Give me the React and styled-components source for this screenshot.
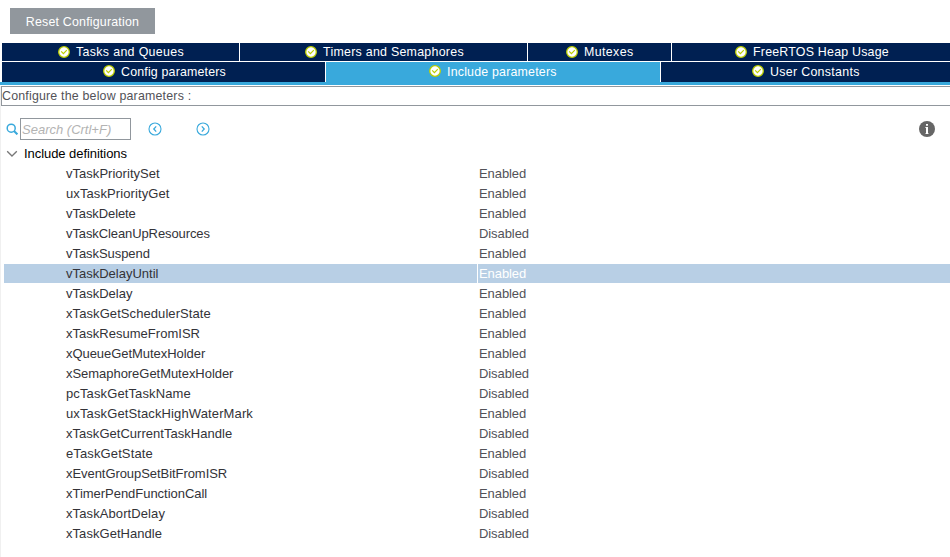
import React from "react";
import styled, { createGlobalStyle } from "styled-components";

const GlobalStyle = createGlobalStyle`
  * { box-sizing: border-box; }
  body {
    margin: 0;
    background: #fff;
    font: 13px/20px "Liberation Sans", Arial, sans-serif;
    overflow: hidden;
  }
`;

const Page = styled.main`
  display: flex;
  flex-direction: column;
  width: 950px;
  height: 557px;
  padding-top: 8px;
`;

const ResetButton = styled.button`
  width: 145px;
  height: 26px;
  margin: 0 0 9px 10px;
  padding: 1px 0 0;
  border: 0;
  background: #91979d;
  color: #fff;
  font: inherit;
  font-size: 12.4px;
  letter-spacing: 0.2px;
`;

const Tabs = styled.nav`
  display: flex;
  flex-direction: column;
  gap: 1px;
  border-bottom: 3px solid #39a9dc;
`;

const TabRow = styled.div`
  display: flex;
  gap: 1px;
  height: ${(p) => p.$height}px;
  padding-left: 2px;
`;

const Tab = styled.div`
  display: flex;
  align-items: center;
  gap: 6px;
  flex: 0 0 ${(p) => p.$width}px;
  padding-left: ${(p) => p.$inset}px;
  padding-bottom: ${(p) => p.$lift}px;
  background: ${(p) => (p.$active ? "#39a9dc" : "#002052")};
  color: #fff;
  font-size: 12.4px;
  line-height: 18px;
  letter-spacing: ${(p) => p.$tracking}px;
  white-space: nowrap;
`;

const TabLabel = styled.span`
  padding-top: ${(p) => p.$lift}px;
`;

const Icon = styled.svg`
  display: block;
  flex: none;
`;

const Panel = styled.section`
  flex: 1;
  margin-top: 1px;
  border-left: 1px solid #f0f0f0;
`;

const Caption = styled.div`
  height: 20px;
  border: 1px solid #91979d;
  border-right: 0;
  color: #525258;
  font-size: 12.4px;
  letter-spacing: 0.19px;
  line-height: 19px;
`;

const Toolbar = styled.div`
  display: flex;
  align-items: center;
  height: 22px;
  margin: 12px 15px 0 5px;
`;

const Search = styled.input`
  width: 111px;
  height: 22px;
  margin: 0 17px 0 2px;
  padding: 0 1px;
  border: 1px solid #91979d;
  outline: 0;
  font: italic 13px "Liberation Sans", Arial, sans-serif;
  letter-spacing: 0;
  &::placeholder { color: #b3b3b3; opacity: 1; }
`;

const StepButton = styled.button`
  width: 14px;
  height: 14px;
  margin-right: 34px;
  padding: 0;
  border: 0;
  background: none;
`;

const Info = styled.div`
  margin-left: auto;
`;

const GroupRow = styled.div`
  display: flex;
  align-items: center;
  gap: 6px;
  height: 20px;
  margin-top: 4px;
  padding-left: 5px;
  color: #000;
  letter-spacing: -0.06px;
`;

const Row = styled.div`
  display: grid;
  grid-template-columns: 473px 1fr;
  column-gap: 1px;
  height: 20px;
  margin-left: 3px;
  padding-bottom: 1px;
`;

const Name = styled.div`
  padding-left: 62px;
  line-height: 19px;
  letter-spacing: ${(p) => p.$tracking}px;
  color: #333338;
  background: ${(p) => (p.$selected ? "#b8cfe5" : "transparent")};
`;

const Value = styled.div`
  padding-left: 1px;
  line-height: 19px;
  letter-spacing: -0.08px;
  color: ${(p) => (p.$selected ? "#fff" : "#525258")};
  background: ${(p) => (p.$selected ? "#b8cfe5" : "transparent")};
`;

const CheckIcon = () => (
  <Icon width="12" height="12" viewBox="0 0 12 12">
    <circle cx="6" cy="6" r="5.3" fill="#fff" stroke="#bccf00" strokeWidth="1.3" />
    <path d="M3.2 5.4 5.4 7.6 8.8 4.2" fill="none" stroke="#bccf00" strokeWidth="1.2" />
  </Icon>
);

const Chevron = ({ d }) => (
  <Icon width="14" height="14" viewBox="0 0 14 14" fill="none" stroke="#39a9dc">
    <circle cx="7" cy="7" r="6" strokeWidth="1.1" />
    <path d={d} strokeWidth="1.3" />
  </Icon>
);

const topTabs = [
  { label: "Tasks and Queues", width: 237, inset: 56, tracking: 0.34 },
  { label: "Timers and Semaphores", width: 287, inset: 65, tracking: 0.27 },
  { label: "Mutexes", width: 143, inset: 38, tracking: 0.38 },
  { label: "FreeRTOS Heap Usage", width: 278, inset: 63, tracking: 0.22 },
];

const bottomTabs = [
  { label: "Config parameters", width: 323, inset: 101, tracking: 0.18 },
  { label: "Include parameters", width: 334, inset: 103, tracking: 0.2, active: true },
  { label: "User Constants", width: 289, inset: 91, tracking: 0.31 },
];

// name, enabled, letter spacing
const parameters = [
  ["vTaskPrioritySet", true, 0.03],
  ["uxTaskPriorityGet", true, 0.1],
  ["vTaskDelete", true, -0.1],
  ["vTaskCleanUpResources", false, -0.1],
  ["vTaskSuspend", true, -0.06],
  ["vTaskDelayUntil", true, 0],
  ["vTaskDelay", true, 0],
  ["xTaskGetSchedulerState", true, 0.08],
  ["xTaskResumeFromISR", true, 0.02],
  ["xQueueGetMutexHolder", true, -0.05],
  ["xSemaphoreGetMutexHolder", false, -0.04],
  ["pcTaskGetTaskName", false, 0.12],
  ["uxTaskGetStackHighWaterMark", true, 0.12],
  ["xTaskGetCurrentTaskHandle", false, 0.03],
  ["eTaskGetState", true, 0.12],
  ["xEventGroupSetBitFromISR", false, -0.06],
  ["xTimerPendFunctionCall", true, -0.03],
  ["xTaskAbortDelay", false, 0.1],
  ["xTaskGetHandle", false, 0.05],
];

const TabStrip = ({ tabs, height, lift }) => (
  <TabRow $height={height}>
    {tabs.map((t) => (
      <Tab
        key={t.label}
        $width={t.width}
        $inset={t.inset}
        $active={t.active}
        $lift={lift}
        $tracking={t.tracking}
      >
        <CheckIcon />
        <TabLabel $lift={lift}>{t.label}</TabLabel>
      </Tab>
    ))}
  </TabRow>
);

export default function App() {
  const selected = "vTaskDelayUntil";
  return (
    <Page>
      <GlobalStyle />
      <ResetButton>Reset Configuration</ResetButton>
      <Tabs>
        <TabStrip tabs={topTabs} height={18} lift={0} />
        <TabStrip tabs={bottomTabs} height={20} lift={2} />
      </Tabs>
      <Panel>
        <Caption>Configure the below parameters :</Caption>
        <Toolbar>
          <Icon width="12" height="12" viewBox="0 0 12 12" fill="none" stroke="#39a9dc">
            <circle cx="5.2" cy="5.2" r="4" strokeWidth="1.5" />
            <path d="M8 8 11.4 11.4" strokeWidth="2" />
          </Icon>
          <Search placeholder="Search (Crtl+F)" />
          <StepButton><Chevron d="M8.2 4.4 5.8 7 8.2 9.6" /></StepButton>
          <StepButton><Chevron d="M5.8 4.4 8.2 7 5.8 9.6" /></StepButton>
          <Info>
            <Icon width="16" height="16" viewBox="0 0 16 16">
              <circle cx="8" cy="8" r="8" fill="#666" />
              <path d="M7 3h2v1.8H7zM6.2 6H9v6.2h.6V13H6.4v-.8H7V6.8h-.8z" fill="#fff" />
            </Icon>
          </Info>
        </Toolbar>
        <GroupRow>
          <Icon width="12" height="12" viewBox="0 0 12 12" fill="none" stroke="#777">
            <path d="M1.2 3.2 6 8 10.8 3.2" strokeWidth="1.3" />
          </Icon>
          Include definitions
        </GroupRow>
        {parameters.map(([name, enabled, tracking]) => (
          <Row key={name}>
            <Name $selected={name === selected} $tracking={tracking}>{name}</Name>
            <Value $selected={name === selected}>{enabled ? "Enabled" : "Disabled"}</Value>
          </Row>
        ))}
      </Panel>
    </Page>
  );
}
